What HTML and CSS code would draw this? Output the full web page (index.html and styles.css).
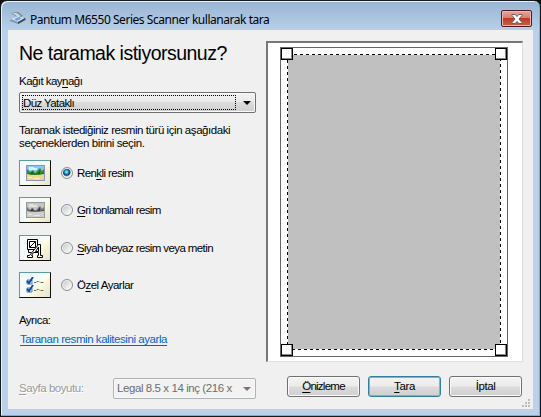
FILE: index.html
```html
<!DOCTYPE html>
<html lang="tr">
<head>
<meta charset="utf-8">
<title>Pantum M6550 Series Scanner kullanarak tara</title>
<link rel="stylesheet" href="styles.css">
</head>
<body>
<div class="window">
  <header class="titlebar">
    <svg class="app-icon" width="16" height="13" viewBox="0 0 16 13">
      <path d="M1 1l7-1 5 4-5 2z" fill="#74818c"/>
      <path d="M2 1l5 0 4 3-3 1z" fill="#c6d5df"/>
      <path d="M0 8l8-4 8 2v2l-8 4-8-3z" fill="#8495a5"/>
      <path d="M1 7l7-3 7 2-7 4z" fill="#d9e7f1"/>
      <path d="M4 7l5-2 3 1-5 3z" fill="#69a5dc"/>
      <path d="M8 10l7-4v2l-7 4z" fill="#394652"/>
    </svg>
    <span class="title">Pantum M6550 Series Scanner kullanarak tara</span>
    <button class="close" aria-label="Kapat">
      <svg width="12" height="10" viewBox="0 0 12 10"><path d="M1 .5h3l2 2 2-2h3v1L8 5l3 3.500v1H8l-2-2-2 2H1v-1L4 5 1 1.500z" fill="#fff" stroke="#60606c"/></svg>
    </button>
  </header>
  <main class="client">
    <div class="body">
      <section class="options">
        <h1>Ne taramak istiyorsunuz?</h1>
        <label class="source-label">Kağıt kay<u>n</u>ağı</label>
        <div class="select source"><span class="focus"><span class="source-text">Düz Yataklı</span></span><i class="arrow"></i></div>
        <p><span class="p1">Taramak istediğiniz resmin türü için aşağıdaki</span><br><span class="p2">seçeneklerden birini seçin.</span></p>
        <div class="choices">
          <div class="choice">
            <span class="tile"><svg width="19" height="16" viewBox="0 0 19 16">
              <path d="M0 0h19v16H0z" fill="#8d93c8"/><path d="M1 1h17v7H1z" fill="#87c9f5"/><path d="M3 2h5v1h3v2H3z" fill="#d9f3fd"/>
              <path d="M1 9h17v6H1z" fill="#f0d98a"/><path d="M1 4l2 2 2 1 2-2 2 3 3-3 2-2 2 3 2-2v5l-5 1H5l-4-1z" fill="#39892a"/>
              <path d="M1 8l3 1 2-3 3 4 3-2 2-3v4l4-1v1H3z" fill="#245a2b"/><path d="M2 12h4v1H2zm6 1h6v1H8z" fill="#fff0b5"/>
            </svg></span>
            <span class="radio on"></span><span class="c1">Ren<u>k</u>li resim</span>
          </div>
          <div class="choice">
            <span class="tile"><svg width="19" height="16" viewBox="0 0 19 16">
              <path d="M0 0h19v16H0z" fill="#999"/><path d="M1 1h17v7H1z" fill="#c5c5c5"/><path d="M3 2h5v1h3v2H3z" fill="#e2e2e2"/>
              <path d="M1 9h17v6H1z" fill="#cecece"/><path d="M1 5l2 2 2 1 2-2 2 3 3-3 2-2 2 3 2-2v4l-5 1H5l-4-1z" fill="#777"/>
              <path d="M1 8l3 1 2-3 3 4 3-2 2-3v4l4-1v1H3z" fill="#3c3c3c"/><path d="M2 12h4v1H2zm6 1h6v1H8z" fill="#e8e8e8"/>
            </svg></span>
            <span class="radio"></span><span class="c2"><u>G</u>ri tonlamalı resim</span>
          </div>
          <div class="choice third">
            <span class="tile"><svg width="18" height="19" viewBox="0 0 18 19" fill="none" stroke="#000">
              <path d="M1.500.500h10v10h-10z" fill="#fff"/><path d="M3.500 2.500h6v6h-6zM4 8l5-5"/>
              <path d="M2.500 10.500v3h3"/>
              <path d="M12.500 5.500h2v11h2v2h-5v-2h1v-3h-5l-2 3h1v2h-5v-2h2z" fill="#fff"/><path d="M12.500 8v4.500h-3z" fill="#fff"/>
            </svg></span>
            <span class="radio"></span><span class="c3"><u>S</u>iyah beyaz resim veya metin</span>
          </div>
          <div class="choice">
            <span class="tile"><svg width="19" height="17" viewBox="0 0 19 17">
              <path d="M1 3h5v4H1zm0 8h5v4H1z" fill="#c8e7ff" stroke="#4a83b8"/>
              <path d="M1 4l2 2 4-6M1 12l2 2 4-6" fill="none" stroke="#1048a0" stroke-width="1.800"/>
              <path d="M8 5.500h2l1-1h2l1 1h4M8 13.500h2l1-1h2l1 1h4" fill="none" stroke="#666" stroke-dasharray="2 .6"/>
            </svg></span>
            <span class="radio"></span><span class="c4">Ö<u>z</u>el Ayarlar</span>
          </div>
        </div>
        <div class="also">Ayrıca:</div>
        <a class="link">Taranan resmin kalitesini ayarla</a>
      </section>
      <section class="preview">
        <div class="page">
          <div class="selection">
            <svg width="214" height="296" viewBox="0 0 214 296" shape-rendering="crispEdges"><path d="M1 1h213v294H1z" fill="#c0c0c0"/><path d="M.5.500h213v295H.5z" fill="none" stroke="#fff"/><path d="M.5.500h213v295H.5z" fill="none" stroke="#000" stroke-dasharray="3 3"/></svg>
            <i class="handle tl"></i><i class="handle tr"></i><i class="handle bl"></i><i class="handle br"></i>
          </div>
        </div>
      </section>
    </div>
    <footer>
      <label class="size-label"><u>S</u>ayfa boyutu:</label>
      <div class="select size"><span class="size-text">Legal 8.5 x 14 inç (216 x</span><i class="arrow"></i></div>
      <div class="actions">
        <button class="btn"><span class="b1"><u>Ö</u>nizleme</span></button>
        <button class="btn default"><span class="b2"><u>T</u>ara</span></button>
        <button class="btn"><span class="b3">İptal</span></button>
      </div>
    </footer>
    <svg class="grip" width="8" height="8" viewBox="0 0 8 8"><path d="M6 0h2v2H6zM3 3h2v2H3zM6 3h2v2H6zM0 6h2v2H0zM3 6h2v2H3zM6 6h2v2H6z" fill="#bcbcbc"/></svg>
  </main>
</div>
</body>
</html>
```
FILE: styles.css
```css
* { box-sizing: border-box; }
body { margin: 0; background: #111; font: 11.5px/13px "Liberation Sans", Arial, sans-serif; color: #000; overflow: hidden; }
u { text-decoration: underline; text-underline-offset: 2px; text-decoration-thickness: 1px; text-decoration-skip-ink: none; }
button { font: inherit; padding: 0; }
.window { width: 541px; height: 417px; padding: 0 6px 6px; border: 1px solid #151a1d; border-radius: 7px 7px 0 0; background: linear-gradient(#98b4d2, #b9d1ea 30px, #b9d1ea); box-shadow: inset -1px -1px #41c8e5, inset 1px 1px #e7f1fa; }
.titlebar { height: 29px; display: flex; align-items: flex-start; padding: 0 2px 0 3px; }
.app-icon { margin: 11px 4px 0 0; }
.title { flex: 1; margin-top: 11px; font: 12px/16px "Noto Sans", sans-serif; white-space: nowrap; letter-spacing: -.46px; }
.close { width: 31px; height: 17px; margin-top: 9px; border: 1px solid #4e1c24; border-radius: 2px; background: linear-gradient(#e5a79b, #d87e6e 47%, #bd3b25 50%, #cb6047); box-shadow: inset 0 0 0 1px #eeb5a8; display: flex; align-items: center; justify-content: center; }
.client { position: relative; width: 525px; height: 379px; margin-left: 1px; background: #f0f0f0; padding: 11px 11px 0; }
.body { display: flex; justify-content: space-between; height: 321px; }
.options { width: 237px; white-space: nowrap; }
h1 { margin: 0; font-size: 19.5px; line-height: 25px; height: 24px; font-weight: 400; letter-spacing: -.51px; }
.source-label { display: block; margin: 10px 0 4px; letter-spacing: -.54px; }
.select { display: flex; align-items: center; height: 21px; border: 1px solid #707070; border-radius: 2px; background: linear-gradient(#f3f3f3, #e9e9e9 48%, #dcdcdc 50%, #d0d0d0); box-shadow: inset 0 0 0 1px #f8f8f8; }
.focus { width: 214px; height: 15px; margin-left: 2px; border: 1px dotted #000; line-height: 14px; }
.source-text { letter-spacing: -.6px; }
.arrow { border: 4px solid transparent; border-top-color: #000; border-bottom: 0; margin-left: auto; margin-right: 4px; }
p { margin: 11px 0 10px; }
.p1 { letter-spacing: -.44px; }
.p2 { letter-spacing: -.37px; }
.choices { display: grid; gap: 11px; }
.choice { display: flex; align-items: center; height: 26px; }
.third { margin-top: 1px; }
.choice > :last-child { margin-left: 4px; }
.c1, .c3 { letter-spacing: -.6px; }
.c2 { letter-spacing: -.68px; }
.c4 { letter-spacing: -.5px; }
.tile { width: 32px; height: 26px; display: flex; align-items: center; justify-content: center; border: solid #101010; border-width: 1px 1.5px 1.5px 1px; border-top-color: #5e9c9c; border-left-color: #5e9c9c; background: linear-gradient(135deg, #f5fafa 0 52%, #fffde6 54%, #f5f3da 70%, #e5e4ca); }
.radio { width: 12px; height: 12px; margin-left: 10px; border: 1px solid #8e8f8f; border-radius: 50%; background: linear-gradient(135deg, #bfc2c5, #f4f4f4 75%); box-shadow: inset 0 0 0 1px #f5f5f5; }
.radio.on { background: radial-gradient(circle at 45% 40%, #7bdcfa 0 10%, #2086b4 25%, #12445f 40%, #d5dfe5 57%); }
.also { margin-top: 16px; letter-spacing: -.6px; }
.link { display: inline-block; margin: 6px 0 0 1px; color: #06c; letter-spacing: -.44px; text-decoration: underline; text-underline-offset: 2px; text-decoration-thickness: 1px; text-decoration-skip-ink: none; }
.preview { width: 257px; margin-right: -1px; border: 1px solid #dedede; border-top: 2px solid #777; border-left: 2px solid #777; background: #fff; padding: 4px 0 0 12px; }
.page { width: 228px; height: 310px; border: 1px solid #666; padding: 6px; }
.selection { position: relative; width: 214px; height: 296px; }
.selection svg { display: block; }
.handle { position: absolute; width: 12px; height: 12px; border: 1px solid #000; background: #fff; box-shadow: inset -1px -1px #888; }
.tl, .bl { left: -6px; }
.tr, .br { right: -6px; }
.tl, .tr { top: -6px; }
.bl, .br { bottom: -6px; }
footer { display: flex; align-items: flex-start; padding-top: 14px; white-space: nowrap; }
.size-label { width: 94px; margin-top: 6px; color: #9b9b9b; text-shadow: 1px 1px #fff; letter-spacing: -.45px; }
.size { width: 143px; margin-top: 2px; padding-left: 3px; color: #6d6d6d; background: #f2f2f2; border-color: #adb2b5; }
.size-text { letter-spacing: -.42px; }
.size .arrow { border-top-color: #777; }
.actions { display: flex; gap: 8px; margin-left: auto; }
.btn { width: 73px; height: 21px; border: 1px solid #707070; border-radius: 3px; background: linear-gradient(#f3f3f3, #ebebeb 49%, #dcdcdc 51%, #cfcfcf); box-shadow: inset 0 0 0 1px #fafafa; color: #000; }
.b1 { letter-spacing: -.75px; }
.b2, .b3 { letter-spacing: -.4px; }
.default { border-color: #357f9e; box-shadow: inset 0 0 0 1px #4fc6ed; }
.grip { position: absolute; right: 3px; bottom: 2px; }
```
